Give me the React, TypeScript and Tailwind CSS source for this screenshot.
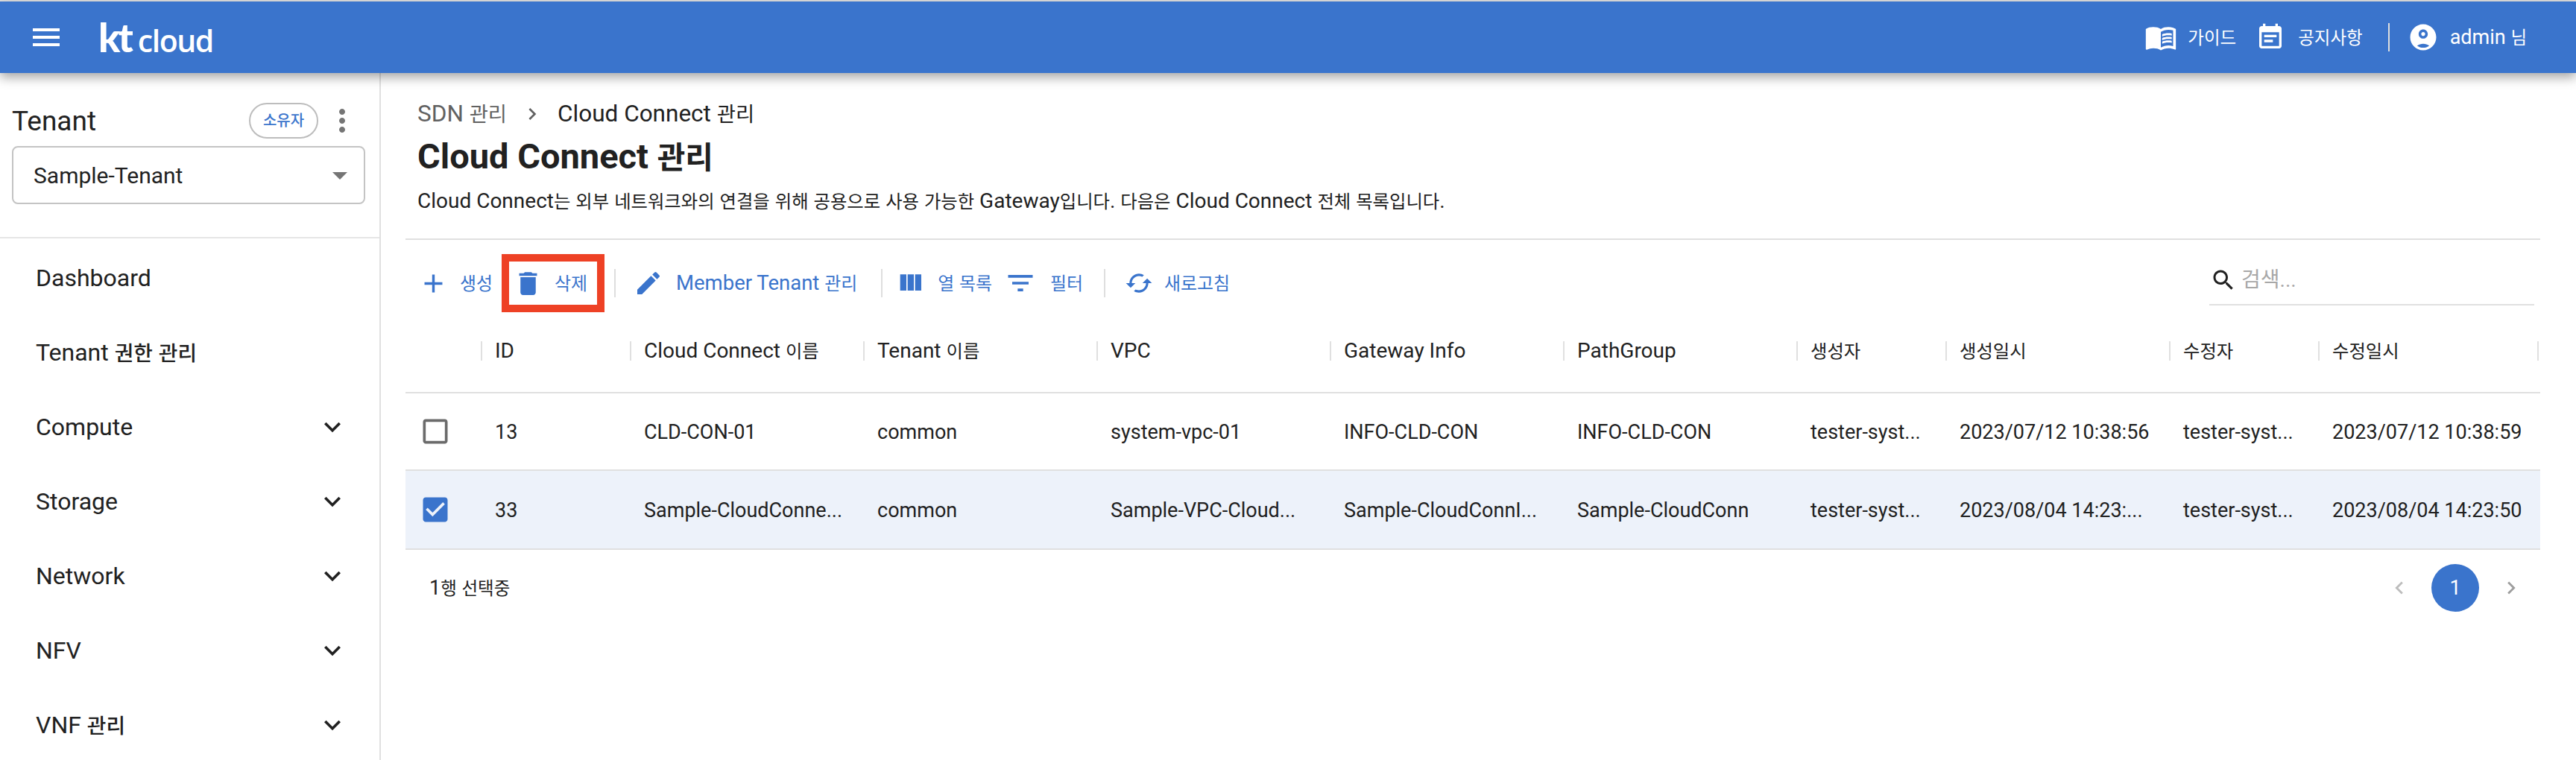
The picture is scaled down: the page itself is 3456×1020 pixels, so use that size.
import type { ReactNode } from 'react';

const font = 'font-["Roboto","Noto_Sans_CJK_KR",sans-serif]';

const icons = {
  menu: 'M3 18h18v-2H3v2zm0-5h18v-2H3v2zm0-7v2h18V6H3z',
  add: 'M19 13h-6v6h-2v-6H5v-2h6V5h2v6h6v2z',
  trash: 'M6 19c0 1.1.9 2 2 2h8c1.1 0 2-.9 2-2V7H6v12zM19 4h-3.5l-1-1h-5l-1 1H5v2h14V4z',
  edit: 'M3 17.25V21h3.75L17.81 9.94l-3.75-3.75L3 17.25zM20.71 7.04c.39-.39.39-1.02 0-1.41l-2.34-2.34a.9959.9959 0 0 0-1.41 0l-1.83 1.83 3.75 3.75 1.83-1.83z',
  columns: 'M10 18h5V5h-5v13zm-6 0h5V5H4v13zM16 5v13h5V5h-5z',
  filter: 'M10 18h4v-2h-4v2zM3 6v2h18V6H3zm3 7h12v-2H6v2z',
  cached: 'M19 8l-4 4h3c0 3.31-2.69 6-6 6-1.01 0-1.97-.25-2.8-.7l-1.46 1.46C8.97 19.54 10.43 20 12 20c4.42 0 8-3.58 8-8h3l-4-4zM6 12c0-3.31 2.69-6 6-6 1.01 0 1.97.25 2.8.7l1.46-1.46C15.03 4.46 13.57 4 12 4c-4.42 0-8 3.58-8 8H1l4 4 4-4H6z',
  search: 'M15.5 14h-.79l-.28-.27C15.41 12.59 16 11.11 16 9.5 16 5.91 13.09 3 9.5 3S3 5.91 3 9.5 5.91 16 9.5 16c1.61 0 3.09-.59 4.23-1.57l.27.28v.79l5 4.99L20.49 19l-4.99-5zm-6 0C7.01 14 5 11.99 5 9.5S7.01 5 9.5 5 14 7.01 14 9.5 11.99 14 9.5 14z',
  more: 'M12 8c1.1 0 2-.9 2-2s-.9-2-2-2-2 .9-2 2 .9 2 2 2zm0 2c-1.1 0-2 .9-2 2s.9 2 2 2 2-.9 2-2-.9-2-2-2zm0 6c-1.1 0-2 .9-2 2s.9 2 2 2 2-.9 2-2-.9-2-2-2z',
  expand: 'M16.59 8.59 12 13.17 7.41 8.59 6 10l6 6 6-6z',
  dropdown: 'M7 10l5 5 5-5z',
  left: 'M15.41 7.41 14 6l-6 6 6 6 1.41-1.41L10.83 12z',
  right: 'M10 6 8.59 7.41 13.17 12l-4.58 4.59L10 18l6-6z',
  checked: 'M19 3H5c-1.11 0-2 .9-2 2v14c0 1.1.89 2 2 2h14c1.11 0 2-.9 2-2V5c0-1.1-.89-2-2-2zm-9 14l-5-5 1.41-1.41L10 14.17l7.59-7.59L19 8l-9 9z',
  blank: 'M19 5v14H5V5h14m0-2H5c-1.1 0-2 .9-2 2v14c0 1.1.9 2 2 2h14c1.1 0 2-.9 2-2V5c0-1.1-.9-2-2-2z',
  book: 'M21 5c-1.11-.35-2.33-.5-3.5-.5-1.95 0-4.05.4-5.5 1.5-1.45-1.1-3.55-1.5-5.5-1.5S2.45 4.9 1 6v14.65c0 .25.25.5.5.5.1 0 .15-.05.25-.05C3.1 20.45 5.05 20 6.5 20c1.95 0 4.05.4 5.5 1.5 1.35-.85 3.8-1.5 5.5-1.5 1.65 0 3.35.3 4.75 1.05.1.05.15.05.25.05.25 0 .5-.25.5-.5V6c-.6-.45-1.25-.75-2-1zm0 13.5c-1.1-.35-2.3-.5-3.5-.5-1.7 0-4.15.65-5.5 1.5V8c1.35-.85 3.8-1.5 5.5-1.5 1.2 0 2.4.15 3.5.5v11.5zM17.5 10.5c.88 0 1.73.09 2.5.26V9.24c-.79-.15-1.64-.24-2.5-.24-1.7 0-3.24.29-4.5.83v1.66c1.13-.64 2.7-.99 4.5-.99zM13 12.49v1.66c1.13-.64 2.7-.99 4.5-.99.88 0 1.73.09 2.5.26V11.9c-.79-.15-1.64-.24-2.5-.24-1.7 0-3.24.3-4.5.83zM17.5 14.33c-1.7 0-3.24.29-4.5.83v1.66c1.13-.64 2.7-.99 4.5-.99.88 0 1.73.09 2.5.26v-1.52c-.79-.16-1.64-.24-2.5-.24z',
  calendar: 'M19 3h-1V1h-2v2H8V1H6v2H5c-1.1 0-2 .9-2 2v14c0 1.1.9 2 2 2h14c1.1 0 2-.9 2-2V5c0-1.1-.9-2-2-2zm0 16H5V8h14v11zM7 10h10v2H7zm0 4h7v2H7z',
  account: 'M12 2C6.48 2 2 6.48 2 12s4.48 10 10 10 10-4.48 10-10S17.52 2 12 2zM7.35 18.5C8.66 17.56 10.26 17 12 17s3.34.56 4.65 1.5C15.34 19.44 13.74 20 12 20s-3.34-.56-4.65-1.5zM12 13c-1.93 0-3.5-1.57-3.5-3.5S10.07 6 12 6s3.5 1.57 3.5 3.5S13.93 13 12 13zm0-5c-.83 0-1.5.67-1.5 1.5S11.17 11 12 11s1.5-.67 1.5-1.5S12.83 8 12 8z',
};

function Icon({ d, className }: { d: string; className: string }) {
  return (
    <svg viewBox="0 0 24 24" fill="currentColor" fillRule="evenodd" className={`shrink-0 ${className}`}>
      <path d={d} />
    </svg>
  );
}

// hangul in the shot runs narrower than Noto at the same size as the latin
function Ko({ text }: { text: string }) {
  return (
    <>
      {text.split(/([가-힣]+)/).map((part, i) =>
        i % 2 === 1 ? (
          <span key={i} className="text-[0.87em]">{part}</span>
        ) : (
          part
        ),
      )}
    </>
  );
}

function Sep({ className = '' }: { className?: string }) {
  return <span className={`h-[38px] w-[2px] shrink-0 bg-[#dedede] ${className}`} />;
}

function ToolButton({ icon, label, iconSize, gap, className = '' }: { icon: string; label: string; iconSize: string; gap: string; className?: string }) {
  return (
    <div className={`flex items-center ${gap} ${className}`}>
      <Icon d={icon} className={iconSize} />
      <span className="whitespace-nowrap">
        <Ko text={label} />
      </span>
    </div>
  );
}

const sideItems: { label: string; sub?: boolean }[] = [
  { label: 'Dashboard' },
  { label: 'Tenant 권한 관리' },
  { label: 'Compute', sub: true },
  { label: 'Storage', sub: true },
  { label: 'Network', sub: true },
  { label: 'NFV', sub: true },
  { label: 'VNF 관리', sub: true },
];

const columns = ['ID', 'Cloud Connect 이름', 'Tenant 이름', 'VPC', 'Gateway Info', 'PathGroup', '생성자', '생성일시', '수정자', '수정일시'];

const rows = [
  ['13', 'CLD-CON-01', 'common', 'system-vpc-01', 'INFO-CLD-CON', 'INFO-CLD-CON', 'tester-syst...', '2023/07/12 10:38:56', 'tester-syst...', '2023/07/12 10:38:59'],
  ['33', 'Sample-CloudConne...', 'common', 'Sample-VPC-Cloud...', 'Sample-CloudConnI...', 'Sample-CloudConn', 'tester-syst...', '2023/08/04 14:23:...', 'tester-syst...', '2023/08/04 14:23:50'],
];

const grid = 'grid grid-cols-[101px_200px_313px_313px_313px_313px_313px_200px_300px_200px_298px]';

function Cell({ children }: { children: ReactNode }) {
  return <div className="flex items-center pt-[2px] pl-[19px] whitespace-nowrap">{children}</div>;
}

export default function App() {
  return (
    <div className={`${font} flex h-[1020px] w-[3456px] flex-col overflow-hidden bg-[#e0e0e0] text-[#212121]`}>
      <header className="relative z-10 mt-[2px] flex h-[96px] shrink-0 items-center justify-between bg-[#3a74cc] pr-[66px] pl-[38px] text-white shadow-[0_6px_14px_rgba(0,0,0,0.35)]">
        <div className="flex items-center">
          <Icon d={icons.menu} className="size-[48px]" />
          <div className="ml-[46px] flex items-baseline whitespace-nowrap">
            <span className='font-["Lato"] text-[54px] leading-none font-black tracking-[-3px]'>kt</span>
            <span className='ml-[9px] font-["Open_Sans"] text-[41px] leading-none font-semibold tracking-[-1.5px]'>cloud</span>
          </div>
        </div>
        <div className="flex items-center text-[27px]">
          <Icon d={icons.book} className="size-[44px]" />
          <span className="ml-[14px]"><Ko text="가이드" /></span>
          <Icon d={icons.calendar} className="ml-[26px] size-[40px]" />
          <span className="ml-[17px]"><Ko text="공지사항" /></span>
          <Sep className="ml-[34px]" />
          <Icon d={icons.account} className="ml-[24px] size-[42px]" />
          <span className="ml-[15px]"><Ko text="admin 님" /></span>
        </div>
      </header>

      <div className="flex min-h-0 flex-1 bg-white">
        <aside className="w-[511px] shrink-0 border-r-2 border-[#e0e0e0]">
          <div className="h-[222px] border-b-2 border-[#e6e6e6] px-[16px] pt-[40px]">
            <div className="flex h-[48px] items-center justify-between">
              <span className="mt-[2px] text-[37px] font-[450]">Tenant</span>
              <div className="flex items-center">
                <span className="flex h-[48px] w-[93px] items-center justify-center rounded-full border-2 border-[#bdbdbd] text-[20px] font-medium text-[#3a74cc]">소유자</span>
                <Icon d={icons.more} className="mr-[10px] ml-[8px] size-[48px] text-[#757575]" />
              </div>
            </div>
            <div className="mt-[10px] flex h-[78px] w-[474px] items-center justify-between rounded-[8px] border-2 border-[#c4c4c4] pr-[8px] pl-[27px] text-[30px]">
              <span>Sample-Tenant</span>
              <Icon d={icons.dropdown} className="size-[48px] text-[#757575]" />
            </div>
          </div>
          <nav className="pt-[16px]">
            {sideItems.map((item) => (
              <div key={item.label} className="flex h-[100px] items-center justify-between pr-[41px] pb-[26px] pl-[48px] text-[32px] font-[450]">
                <span><Ko text={item.label} /></span>
                {item.sub && <Icon d={icons.expand} className="size-[44px]" />}
              </div>
            ))}
          </nav>
        </aside>

        <main className="min-w-0 flex-1 pt-[33px] pr-[48px] pl-[33px]">
          <div className="pl-[16px]">
            <div className="flex h-[44px] items-center text-[31.5px]">
              <span className="text-[#616161]"><Ko text="SDN 관리" /></span>
              <Icon d={icons.right} className="mx-[18px] size-[32px] text-[#616161]" />
              <span><Ko text="Cloud Connect 관리" /></span>
            </div>
            <h1 className="mt-[5px] text-[47px] leading-[60px] font-bold"><Ko text="Cloud Connect 관리" /></h1>
            <p className="mt-[8px] text-[28px] leading-[40px]"><Ko text="Cloud Connect는 외부 네트워크와의 연결을 위해 공용으로 사용 가능한 Gateway입니다. 다음은 Cloud Connect 전체 목록입니다." /></p>
          </div>
          <div className="mt-[29px] border-t-2 border-[#e0e0e0]">
            <div className="flex h-[116px] items-center pl-[17px] text-[27.5px] text-[#3a74cc]">
              <ToolButton icon={icons.add} label="생성" iconSize="size-[41px]" gap="gap-[15px]" />
              <div className="ml-[12px] flex h-[78px] w-[138px] items-center gap-[15px] border-[10px] border-[#ee4125] pl-[5px]">
                <Icon d={icons.trash} className="size-[41px]" />
                <span><Ko text="삭제" /></span>
              </div>
              <Sep className="ml-[13px]" />
              <ToolButton icon={icons.edit} label="Member Tenant 관리" iconSize="size-[40px]" gap="gap-[17px]" className="ml-[24px]" />
              <Sep className="ml-[32px]" />
              <ToolButton icon={icons.columns} label="열 목록" iconSize="size-[40px]" gap="gap-[17px]" className="ml-[17px]" />
              <ToolButton icon={icons.filter} label="필터" iconSize="size-[44px]" gap="gap-[18px]" className="ml-[16px]" />
              <Sep className="ml-[28px]" />
              <ToolButton icon={icons.cached} label="새로고침" iconSize="size-[38px]" gap="gap-[15px]" className="ml-[26px]" />
              <div className="mr-[8px] mb-[6px] ml-auto flex h-[66px] w-[436px] items-center border-b-2 border-[#e0e0e0] pl-[1px]">
                <Icon d={icons.search} className="size-[36px] text-[#212121]" />
                <span className="ml-[6px] text-[28px] text-[#a8a8a8]">검색...</span>
              </div>
            </div>
            <div className={`${grid} h-[90px] items-center border-b-2 border-[#e0e0e0] pb-[22px] text-[28px]`}>
              <div />
              {columns.map((c) => (
                <div key={c} className="mr-[-2px] flex h-[26px] items-center border-l-2 border-[#e0e0e0] pl-[17px] whitespace-nowrap last:mr-[2px] last:border-r-2">
                  <span><Ko text={c} /></span>
                </div>
              ))}
            </div>
            {rows.map((row, i) => (
              <div key={row[0]} className={`${grid} border-b-2 border-[#e0e0e0] text-[27px] ${i === 1 ? 'h-[106px] bg-[#edf2fa]' : 'h-[104px]'}`}>
                <div className="flex items-center pl-[18px]">
                  <Icon d={i === 1 ? icons.checked : icons.blank} className={`size-[44px] ${i === 1 ? 'text-[#3a74cc]' : 'text-[#6b6b6b]'}`} />
                </div>
                {row.map((v, j) => (
                  <Cell key={j}>{v}</Cell>
                ))}
              </div>
            ))}
            <div className="flex h-[102px] items-center justify-between pr-[22px] pl-[32px] text-[27px]">
              <span><Ko text="1행 선택중" /></span>
              <div className="flex items-center text-[#bdbdbd]">
                <Icon d={icons.left} className="size-[34px]" />
                <span className="mx-[26px] flex size-[64px] items-center justify-center rounded-full bg-[#3a74cc] text-[27px] text-white">1</span>
                <Icon d={icons.right} className="size-[34px] text-[#9e9e9e]" />
              </div>
            </div>
          </div>
        </main>
      </div>
    </div>
  );
}
